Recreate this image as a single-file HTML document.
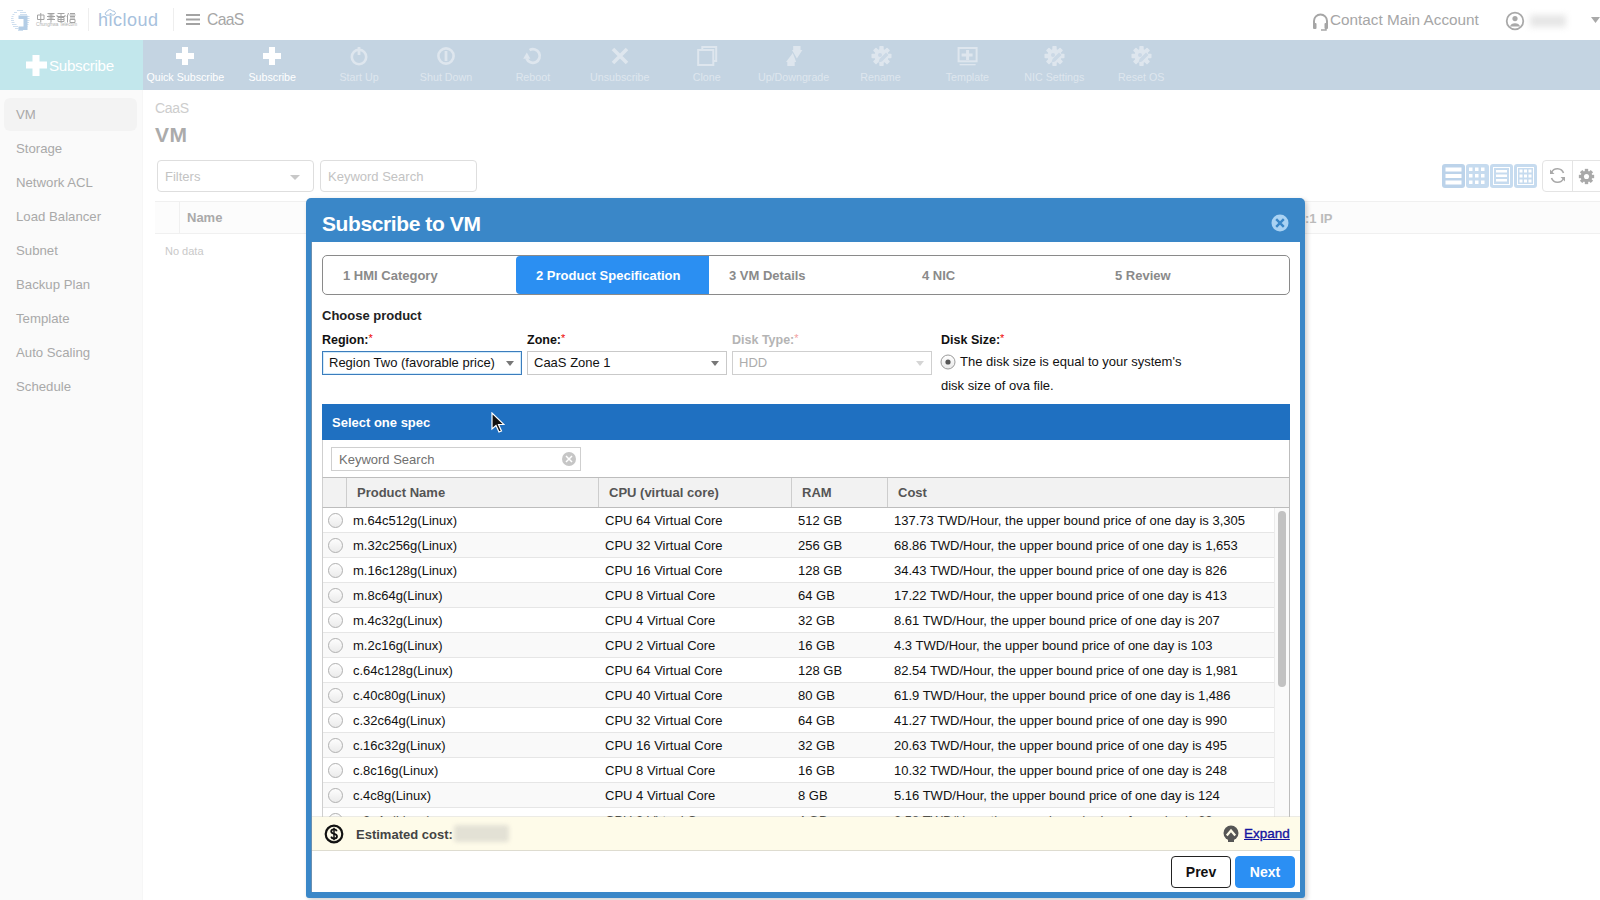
<!DOCTYPE html>
<html><head><meta charset="utf-8">
<style>
*{box-sizing:border-box;margin:0;padding:0}
html,body{width:1600px;height:900px;overflow:hidden;background:#fff;font-family:"Liberation Sans",sans-serif}
.a{position:absolute}
/* header */
#hdr{position:absolute;left:0;top:0;width:1600px;height:40px;background:#fff}
.sep{position:absolute;top:8px;width:1px;height:23px;background:#eee}
/* toolbar */
#tb{position:absolute;left:0;top:40px;width:1600px;height:50px;background:#c4d4e2}
#subbtn{position:absolute;left:0;top:40px;width:143px;height:50px;background:#c2e7ec}
.ti{position:absolute;top:40px;width:87px;height:50px;text-align:center;font-size:10.7px;white-space:nowrap}
.ti .tic{position:absolute;left:33.5px;top:6px;overflow:visible}
.ti span{position:absolute;left:0;right:0;top:31px;line-height:13px}
/* sidebar */
#side{position:absolute;left:0;top:90px;width:143px;height:810px;background:#fafafa;border-right:1px solid #f6f6f6}
#side .sel{position:absolute;left:4px;top:8px;width:133px;height:33px;background:#f3f3f3;border-radius:6px}
.si{position:absolute;left:16px;font-size:13.2px;line-height:18px;color:#a9a9a9}
/* page content */
.fbox{position:absolute;top:160px;height:32px;border:1px solid #dedede;border-radius:4px;background:#fff;font-size:13px;color:#c3c3c3;padding:1px 0 0 7px;line-height:30px}
#thdr{position:absolute;left:155px;top:201px;width:1445px;height:33px;background:#fcfcfc;border-top:1px solid #f0f0f0;border-bottom:1px solid #f0f0f0}
/* modal */
#modal{position:absolute;left:306px;top:198px;width:999px;height:700px;background:#3a87c8;border-radius:5px 5px 3px 3px;box-shadow:2px 2px 5px rgba(0,0,0,0.2)}
#mtitle{position:absolute;left:16px;top:13px;color:#fff;font-size:21px;font-weight:700;letter-spacing:-0.4px;line-height:26px}
#mbody{position:absolute;left:5px;top:44px;width:989px;height:650px;background:#fff;border-left:1px solid #6a8fb0}
#steps{position:absolute;left:322px;top:255px;width:968px;height:40px;border:1px solid #8a8a8a;border-radius:5px;background:#fff}
.st{position:absolute;top:1px;height:38px;line-height:38px;font-size:13px;font-weight:700;color:#8a8a8a;white-space:nowrap}
#stact{position:absolute;left:193px;top:0;width:193px;height:38px;background:#2b8ff2;border-radius:4px 0 0 4px}
.lbl{position:absolute;top:332px;font-size:12.5px;font-weight:700;color:#111;line-height:16px;white-space:nowrap}
.lbl b{color:#e00;font-weight:400;font-size:11px;position:relative;top:-2px;margin-left:0px}
.sel2{position:absolute;top:351px;width:200px;height:24px;border:1px solid #c9c9c9;background:#fff;font-size:13px;line-height:22px;color:#111;padding-left:6px;white-space:nowrap}
.sel2 .arr{position:absolute;right:7px;top:9px;width:0;height:0;border-left:4px solid transparent;border-right:4px solid transparent;border-top:5px solid #777}
#spechdr{position:absolute;left:322px;top:404px;width:968px;height:36px;background:#1f70c1;color:#fff;font-size:13px;font-weight:700;line-height:36px;padding:1px 0 0 10px}
#specpanel{position:absolute;left:322px;top:440px;width:968px;height:380px;border-left:1px solid #cfcfcf;border-right:1px solid #bdbdbd;background:#fff;overflow:hidden}
#ksearch{position:absolute;left:331px;top:447px;width:250px;height:24px;border:1px solid #cfcfcf;font-size:13px;color:#707070;line-height:23px;padding-left:7px}
#ksearch i{position:absolute;right:4px;top:4px;width:14px;height:14px;border-radius:50%;background:#c6c6c6}
#gh{position:absolute;left:322px;top:477px;width:968px;height:31px;background:#f2f2f2;border-top:1px solid #bdbdbd;border-bottom:1px solid #bdbdbd;border-left:1px solid #cfcfcf;border-right:1px solid #bdbdbd}
.gd{position:absolute;top:478px;width:1px;height:29px;background:#cdcdcd}
.gh{position:absolute;top:485px;font-size:13px;font-weight:700;color:#555;line-height:16px}
.row{position:absolute;left:323px;width:951px;height:25px;border-bottom:1px solid #e6e6e6;font-size:13px;color:#111;line-height:24px;white-space:nowrap}
.row span{position:absolute;top:1px}
.c1{left:30px}.c2{left:282px}.c3{left:475px}.c4{left:571px}
.rad{position:absolute;left:5px;top:5px;width:15px;height:15px;border-radius:50%;border:1px solid #b0b0b0;background:linear-gradient(#fdfdfd,#ebebeb)}
#sbtrack{position:absolute;left:1274px;top:508px;width:15px;height:309px;background:#fafafa;border-left:1px solid #ececec}
#sbthumb{position:absolute;left:1278px;top:511px;width:8px;height:176px;background:#c2c2c2;border-radius:4px}
#cost{position:absolute;left:312px;top:817px;width:988px;height:34px;box-shadow:0 -1px 0 rgba(200,198,180,0.35);background:#fefbe9;border-bottom:1px solid #dedcd0}
#costlbl{position:absolute;left:356px;top:827px;font-size:13px;font-weight:700;color:#444;line-height:16px}
#costblur{position:absolute;left:454px;top:825px;width:55px;height:17px;background:#e3e1d5;filter:blur(2px);border-radius:3px}
#expand{position:absolute;left:1244px;top:825px;font-size:13.5px;color:#1414a0;text-decoration:underline;line-height:17px;-webkit-text-stroke:0.35px #1414a0}
.btn{position:absolute;top:856px;height:32px;width:60px;border-radius:4px;font-size:14px;font-weight:700;text-align:center;line-height:30px}
</style></head><body>
<div id="hdr">
  <svg class="a" style="left:9px;top:9px" width="23" height="23" viewBox="0 0 23 23">
    <g stroke="#c9dbed" stroke-width="0.9">
      <path d="M8 1.5h6M5 3.5h3M11 3.5h6M3.5 5.5h2M11 5.5h7M2.5 7.5h2M13 7.5h7.5M2 9.5h2.5M15 9.5h5.5M2 11.5h3M15 11.5h5.5M2.5 13.5h3M15 13.5h5M3 15.5h4.5M15 15.5h4.5M4 17.5h5M15 17.5h3.5M6 19.5h3.5M15 19.5h2M9 21.5h5"/>
    </g>
    <path d="M9.5 6.5h9v14.5h-9v-3.5h5v-7.5h-5z" fill="#b3cde6"/>
  </svg>
  <svg class="a" style="left:36px;top:12px" width="40" height="16" viewBox="0 0 40 16">
    <g fill="none" stroke="#a4a4a4" stroke-width="1">
      <path d="M1.5 3h6.5v4.5H1.5zM4.75 1v9.5"/>
      <path d="M11.5 1.5h7M12.5 3h5M11 4.5h8M12.5 6h5M11 7.5h8M15 1v9.5"/>
      <path d="M21.5 1.5h7M21 3v1.5h8V3M25 1.5v3M22 5.5h6v4h-6zM22 7.5h6M25 5.5v4"/>
      <path d="M32.5 1l-1.5 4M31.5 3.5v7M34 1.5h5M33.5 3h6M34 4.5h5M34 6h5M34 7.5h5v3h-5z"/>
    </g>
  </svg>
  <div class="a" style="left:36px;top:22px;font-size:4.7px;color:#b0b0b0;line-height:6px;white-space:nowrap;letter-spacing:0px">Chunghwa Telecom</div>
  <div class="sep" style="left:88px"></div>
  <div class="a" style="left:98px;top:8px;font-size:18px;color:#a7c1dd;letter-spacing:0.5px;line-height:24px">hicloud</div>
  <svg class="a" style="left:104px;top:9px" width="12" height="7" viewBox="0 0 12 7"><path d="M2 6.2a2 2 0 0 1 1-3.5 3 3 0 0 1 5.5-.5 2 2 0 0 1 1.5 3.8z" fill="none" stroke="#a7c1dd" stroke-width="1"/></svg>
  <div class="sep" style="left:173px"></div>
  <svg class="a" style="left:186px;top:14px" width="14" height="11" viewBox="0 0 14 11"><path d="M0 1h14M0 5.5h14M0 10h14" stroke="#a3a3a3" stroke-width="1.8"/></svg>
  <div class="a" style="left:207px;top:10px;font-size:15.7px;color:#a6a6a6;line-height:20px;letter-spacing:-0.7px">CaaS</div>

  <svg class="a" style="left:1312px;top:13px" width="17" height="18" viewBox="0 0 17 18">
    <path d="M2 11V8a6.5 6.5 0 0 1 13 0v3" fill="none" stroke="#a6a6a6" stroke-width="2"/>
    <rect x="1" y="10" width="3.5" height="6" rx="1" fill="#a6a6a6"/><rect x="12.5" y="10" width="3.5" height="6" rx="1" fill="#a6a6a6"/>
    <path d="M14 15v2h-5" fill="none" stroke="#a6a6a6" stroke-width="1.5"/>
  </svg>
  <div class="a" style="left:1330px;top:10px;font-size:15.3px;color:#a6a6a6;line-height:20px">Contact Main Account</div>
  <svg class="a" style="left:1505px;top:11px" width="20" height="20" viewBox="0 0 20 20">
    <circle cx="10" cy="10" r="8.3" fill="none" stroke="#a9a9a9" stroke-width="1.8"/>
    <circle cx="10" cy="7.6" r="2.6" fill="#a9a9a9"/>
    <path d="M4.8 15.5a5.5 5 0 0 1 10.4 0" fill="#a9a9a9"/>
  </svg>
  <div class="a" style="left:1530px;top:15px;width:36px;height:12px;background:#e6e6e6;filter:blur(3px)"></div>
  <svg class="a" style="left:1591px;top:17px" width="9" height="7" viewBox="0 0 9 7"><path d="M0 0h9L4.5 6z" fill="#a9a9a9"/></svg>
</div>

<div id="tb"></div>
<div id="subbtn">
  <svg class="a" style="left:26px;top:15px" width="21" height="21" viewBox="0 0 21 21"><path d="M6.5 0h7v6.5H21v7h-7.5V21h-7v-7.5H0v-7h6.5z" fill="#fff"/></svg>
  <div class="a" style="left:49px;top:16px;font-size:15.2px;color:#fff;line-height:19px;letter-spacing:-0.3px">Subscribe</div>
</div>
<div class="ti" style="left:141.8px;color:#fff"><svg class="tic" width="20" height="20" viewBox="0 0 20 20"><path d="M7 1h6v6h6v6h-6v6H7v-6H1V7h6z" fill="#fff"/></svg><span>Quick Subscribe</span></div>
<div class="ti" style="left:228.70000000000002px;color:#fff"><svg class="tic" width="20" height="20" viewBox="0 0 20 20"><path d="M7 1h6v6h6v6h-6v6H7v-6H1V7h6z" fill="#fff"/></svg><span>Subscribe</span></div>
<div class="ti" style="left:315.6px;color:#dee6ee"><svg class="tic" width="20" height="20" viewBox="0 0 20 20"><circle cx="10" cy="11" r="7.2" fill="none" stroke="#dee6ee" stroke-width="2.6"/><rect x="8.6" y="1" width="2.8" height="8" fill="#dee6ee"/><rect x="7.8" y="2" width="4.4" height="1.5" fill="#c4d4e2" opacity="0"/></svg><span>Start Up</span></div>
<div class="ti" style="left:402.50000000000006px;color:#dee6ee"><svg class="tic" width="20" height="20" viewBox="0 0 20 20"><circle cx="10" cy="10" r="7.6" fill="none" stroke="#dee6ee" stroke-width="2.6"/><rect x="8.6" y="5" width="2.8" height="10" fill="#dee6ee"/></svg><span>Shut Down</span></div>
<div class="ti" style="left:489.40000000000003px;color:#dee6ee"><svg class="tic" width="20" height="20" viewBox="0 0 20 20"><path d="M6.6 4.1A6.8 6.8 0 1 1 3.6 12.5" fill="none" stroke="#dee6ee" stroke-width="2.8"/><path d="M0.2 12.8l3.6-6.3 3.6 6.3z" fill="#dee6ee"/></svg><span>Reboot</span></div>
<div class="ti" style="left:576.3px;color:#dee6ee"><svg class="tic" width="20" height="20" viewBox="0 0 20 20"><path d="M3 3L17 17M17 3L3 17" stroke="#dee6ee" stroke-width="3.6"/></svg><span>Unsubscribe</span></div>
<div class="ti" style="left:663.2px;color:#dee6ee"><svg class="tic" width="20" height="20" viewBox="0 0 20 20"><path d="M1.2 4.1h15.1v14.9H1.2z" fill="none" stroke="#dee6ee" stroke-width="2"/><path d="M5.3 4.1V1.1h13.9v13.8h-2.9" fill="none" stroke="#dee6ee" stroke-width="2"/></svg><span>Clone</span></div>
<div class="ti" style="left:750.1000000000001px;color:#dee6ee"><svg class="tic" width="20" height="20" viewBox="0 0 20 20"><path d="M9.2 0h7.3v4h1.9l-5.5 8.5L8 4h1.2z" fill="#dee6ee"/><path d="M8.8 7l3.4 9h-1.5v4H3.3v-4H2z" fill="#dee6ee"/></svg><span>Up/Downgrade</span></div>
<div class="ti" style="left:837.0px;color:#dee6ee"><svg class="tic" width="20" height="20" viewBox="0 0 20 20"><g fill="#dee6ee"><circle cx="10.5" cy="10" r="7"/><rect x="8.3" y="0" width="4.4" height="20" rx="0.8"/><rect x="0.5" y="7.8" width="20" height="4.4" rx="0.8"/><rect x="8.3" y="0" width="4.4" height="20" rx="0.8" transform="rotate(45 10.5 10)"/><rect x="8.3" y="0" width="4.4" height="20" rx="0.8" transform="rotate(-45 10.5 10)"/></g><path d="M7.5 16.5l1-3.5 6.5-6.5 2.5 2.5-6.5 6.5z" fill="#cbd9e6"/><circle cx="9" cy="9" r="2" fill="#cbd9e6"/></svg><span>Rename</span></div>
<div class="ti" style="left:923.9000000000001px;color:#dee6ee"><svg class="tic" width="20" height="20" viewBox="0 0 20 20"><rect x="1.6" y="2" width="18" height="13.3" fill="none" stroke="#dee6ee" stroke-width="2"/><path d="M10.6 4v10M4.6 9h11" stroke="#dee6ee" stroke-width="3"/><rect x="2.6" y="18" width="16" height="1.3" fill="#dee6ee"/></svg><span>Template</span></div>
<div class="ti" style="left:1010.8px;color:#dee6ee"><svg class="tic" width="20" height="20" viewBox="0 0 20 20"><g fill="#dee6ee"><circle cx="10.5" cy="10" r="7"/><rect x="8.3" y="0" width="4.4" height="20" rx="0.8"/><rect x="0.5" y="7.8" width="20" height="4.4" rx="0.8"/><rect x="8.3" y="0" width="4.4" height="20" rx="0.8" transform="rotate(45 10.5 10)"/><rect x="8.3" y="0" width="4.4" height="20" rx="0.8" transform="rotate(-45 10.5 10)"/></g><path d="M7.5 16.5l1-3.5 6.5-6.5 2.5 2.5-6.5 6.5z" fill="#cbd9e6"/><circle cx="9" cy="9" r="2" fill="#cbd9e6"/></svg><span>NIC Settings</span></div>
<div class="ti" style="left:1097.7px;color:#dee6ee"><svg class="tic" width="20" height="20" viewBox="0 0 20 20"><g fill="#dee6ee"><circle cx="10.5" cy="10" r="7"/><rect x="8.3" y="0" width="4.4" height="20" rx="0.8"/><rect x="0.5" y="7.8" width="20" height="4.4" rx="0.8"/><rect x="8.3" y="0" width="4.4" height="20" rx="0.8" transform="rotate(45 10.5 10)"/><rect x="8.3" y="0" width="4.4" height="20" rx="0.8" transform="rotate(-45 10.5 10)"/></g><path d="M7.5 16.5l1-3.5 6.5-6.5 2.5 2.5-6.5 6.5z" fill="#cbd9e6"/><circle cx="9" cy="9" r="2" fill="#cbd9e6"/></svg><span>Reset OS</span></div>


<div id="side">
<div class="sel"></div><div class="si" style="top:16px">VM</div>
<div class="si" style="top:50px">Storage</div>
<div class="si" style="top:84px">Network ACL</div>
<div class="si" style="top:118px">Load Balancer</div>
<div class="si" style="top:152px">Subnet</div>
<div class="si" style="top:186px">Backup Plan</div>
<div class="si" style="top:220px">Template</div>
<div class="si" style="top:254px">Auto Scaling</div>
<div class="si" style="top:288px">Schedule</div>

</div>

<div class="a" style="left:155px;top:99px;font-size:14px;color:#cdcdcd;line-height:18px;letter-spacing:-0.3px">CaaS</div>
<div class="a" style="left:155px;top:123px;font-size:21px;color:#ababab;line-height:24px;font-weight:700;letter-spacing:0.6px">VM</div>
<div class="fbox" style="left:157px;width:157px">Filters<i class="a" style="right:13px;top:14px;width:0;height:0;border-left:5px solid transparent;border-right:5px solid transparent;border-top:5px solid #c8c8c8"></i></div>
<div class="fbox" style="left:320px;width:157px">Keyword Search</div>
<div id="thdr"></div>
<div class="a" style="left:179px;top:202px;width:1px;height:31px;background:#f0f0f0"></div>
<div class="a" style="left:187px;top:210px;font-size:13px;font-weight:700;color:#aaa;line-height:16px">Name</div>
<div class="a" style="left:1305px;top:211px;font-size:13px;font-weight:700;color:#bbb;line-height:16px">:1 IP</div>
<div class="a" style="left:165px;top:244px;font-size:11px;color:#c9c9c9;line-height:14px">No data</div>

<!-- view buttons -->
<div class="a" style="left:1442px;top:164px;width:23px;height:24px;background:#bcd3ea;border-radius:3px"></div>
<div class="a" style="left:1466px;top:164px;width:23px;height:24px;background:#c6dbef;border-radius:3px"></div>
<div class="a" style="left:1490px;top:164px;width:23px;height:24px;background:#c6dbef;border-radius:3px"></div>
<div class="a" style="left:1514px;top:164px;width:23px;height:24px;background:#c6dbef;border-radius:3px"></div>
<svg class="a" style="left:1442px;top:164px" width="96" height="24" viewBox="0 0 96 24">
  <g fill="#fff"><rect x="3.5" y="3.5" width="16" height="4"/><rect x="3.5" y="10" width="16" height="4"/><rect x="3.5" y="16.5" width="16" height="4"/></g>
  <g fill="#fff"><rect x="27" y="3.5" width="3.5" height="3.5"/><rect x="33" y="3.5" width="3.5" height="3.5"/><rect x="39" y="3.5" width="3.5" height="3.5"/>
  <rect x="27" y="10" width="3.5" height="3.5"/><rect x="33" y="10" width="3.5" height="3.5"/><rect x="39" y="10" width="3.5" height="3.5"/>
  <rect x="27" y="16.5" width="3.5" height="3.5"/><rect x="33" y="16.5" width="3.5" height="3.5"/><rect x="39" y="16.5" width="3.5" height="3.5"/></g>
  <rect x="51.5" y="3.5" width="16" height="17" fill="none" stroke="#fff" stroke-width="1"/>
  <g fill="#fff"><rect x="54" y="6" width="11" height="2.5"/><rect x="54" y="10.5" width="11" height="2.5"/><rect x="54" y="15" width="11" height="2.5"/></g>
  <rect x="75.5" y="3.5" width="16" height="17" fill="none" stroke="#fff" stroke-width="1"/>
  <g fill="#fff"><rect x="77.5" y="5.5" width="3" height="3"/><rect x="82" y="5.5" width="3" height="3"/><rect x="86.5" y="5.5" width="3" height="3"/>
  <rect x="77.5" y="10.5" width="3" height="3"/><rect x="82" y="10.5" width="3" height="3"/><rect x="86.5" y="10.5" width="3" height="3"/>
  <rect x="77.5" y="15.5" width="3" height="3"/><rect x="82" y="15.5" width="3" height="3"/><rect x="86.5" y="15.5" width="3" height="3"/></g>
</svg>
<div class="a" style="left:1542px;top:160px;width:70px;height:32px;border:1px solid #e4e4e4;border-radius:4px;background:#fff"></div>
<div class="a" style="left:1572px;top:161px;width:1px;height:30px;background:#e4e4e4"></div>
<svg class="a" style="left:1549px;top:167px" width="17" height="17" viewBox="0 0 17 17">
  <path d="M14.5 6A6.5 6.5 0 0 0 2.5 5.5M2.5 11a6.5 6.5 0 0 0 12 .5" fill="none" stroke="#a9a9a9" stroke-width="1.6"/>
  <path d="M1 2.5v4.5h4.5z" fill="#a9a9a9"/><path d="M16 14.5V10h-4.5z" fill="#a9a9a9"/>
</svg>
<svg class="a" style="left:1578px;top:168px" width="17" height="17" viewBox="0 0 20 20">
  <g fill="#a9a9a9"><circle cx="10" cy="10" r="6.8"/><rect x="8" y="1" width="4" height="18"/><rect x="1" y="8" width="18" height="4"/><rect x="8" y="1" width="4" height="18" transform="rotate(45 10 10)"/><rect x="8" y="1" width="4" height="18" transform="rotate(-45 10 10)"/></g>
  <circle cx="10" cy="10" r="3" fill="#fff"/>
</svg>

<!-- modal -->
<div id="modal">
  <div id="mtitle">Subscribe to VM</div>
  <svg class="a" style="left:965px;top:16px" width="18" height="18" viewBox="0 0 18 18">
    <circle cx="9" cy="9" r="8.5" fill="#a9d2f3"/>
    <path d="M5.2 5.2l7.6 7.6M12.8 5.2l-7.6 7.6" stroke="#3a87c8" stroke-width="2.4"/>
  </svg>
  <div id="mbody"></div>
</div>

<div id="steps">
  <div id="stact"></div>
  <div class="st" style="left:20px">1 HMI Category</div>
  <div class="st" style="left:213px;color:#fff">2 Product Specification</div>
  <div class="st" style="left:406px">3 VM Details</div>
  <div class="st" style="left:599px">4 NIC</div>
  <div class="st" style="left:792px">5 Review</div>
</div>

<div class="a" style="left:322px;top:308px;font-size:13px;font-weight:700;color:#222;line-height:16px">Choose product</div>
<div class="lbl" style="left:322px">Region:<b>*</b></div>
<div class="lbl" style="left:527px">Zone:<b>*</b></div>
<div class="lbl" style="left:732px;color:#b4b4b4">Disk Type:<b style="color:#f3a0a0">*</b></div>
<div class="lbl" style="left:941px">Disk Size:<b>*</b></div>
<div class="sel2" style="left:322px;border-color:#3b7dbd;box-shadow:inset 0 0 0 1px #d3ebfb">Region Two (favorable price)<i class="arr"></i></div>
<div class="sel2" style="left:527px">CaaS Zone 1<i class="arr"></i></div>
<div class="sel2" style="left:732px;color:#adadad;border-color:#cfcfcf">HDD<i class="arr" style="border-top-color:#d5d5d5"></i></div>
<svg class="a" style="left:940px;top:354px" width="16" height="16" viewBox="0 0 16 16">
  <defs><linearGradient id="rg" x1="0" y1="0" x2="0" y2="1"><stop offset="0" stop-color="#fff"/><stop offset="1" stop-color="#e8e8e8"/></linearGradient></defs>
  <circle cx="8" cy="8" r="7" fill="url(#rg)" stroke="#9a9a9a" stroke-width="1"/>
  <circle cx="8" cy="8" r="2.6" fill="#555"/>
</svg>
<div class="a" style="left:960px;top:354px;font-size:13px;color:#111;line-height:16px;white-space:nowrap">The disk size is equal to your system's</div>
<div class="a" style="left:941px;top:378px;font-size:13px;color:#111;line-height:16px;white-space:nowrap">disk size of ova file.</div>

<div id="spechdr">Select one spec</div>
<div id="specpanel"></div>
<div id="ksearch">Keyword Search<i><svg class="a" style="left:3px;top:3px" width="8" height="8" viewBox="0 0 8 8"><path d="M1 1l6 6M7 1L1 7" stroke="#fff" stroke-width="1.5"/></svg></i></div>
<div id="gh"></div>
<div class="gd" style="left:346px"></div>
<div class="gd" style="left:598px"></div>
<div class="gd" style="left:791px"></div>
<div class="gd" style="left:887px"></div>
<div class="gh" style="left:357px">Product Name</div>
<div class="gh" style="left:609px">CPU (virtual core)</div>
<div class="gh" style="left:802px">RAM</div>
<div class="gh" style="left:898px">Cost</div>
<div class="a" style="left:322px;top:508px;width:968px;height:309px;overflow:hidden">
<div style="position:absolute;left:-322px;top:-508px;width:1600px;height:900px">
<div class="row" style="top:508px;background:#fff"><i class="rad"></i><span class="c1">m.64c512g(Linux)</span><span class="c2">CPU 64 Virtual Core</span><span class="c3">512 GB</span><span class="c4">137.73 TWD/Hour, the upper bound price of one day is 3,305</span></div>
<div class="row" style="top:533px;background:#f9f9f9"><i class="rad"></i><span class="c1">m.32c256g(Linux)</span><span class="c2">CPU 32 Virtual Core</span><span class="c3">256 GB</span><span class="c4">68.86 TWD/Hour, the upper bound price of one day is 1,653</span></div>
<div class="row" style="top:558px;background:#fff"><i class="rad"></i><span class="c1">m.16c128g(Linux)</span><span class="c2">CPU 16 Virtual Core</span><span class="c3">128 GB</span><span class="c4">34.43 TWD/Hour, the upper bound price of one day is 826</span></div>
<div class="row" style="top:583px;background:#f9f9f9"><i class="rad"></i><span class="c1">m.8c64g(Linux)</span><span class="c2">CPU 8 Virtual Core</span><span class="c3">64 GB</span><span class="c4">17.22 TWD/Hour, the upper bound price of one day is 413</span></div>
<div class="row" style="top:608px;background:#fff"><i class="rad"></i><span class="c1">m.4c32g(Linux)</span><span class="c2">CPU 4 Virtual Core</span><span class="c3">32 GB</span><span class="c4">8.61 TWD/Hour, the upper bound price of one day is 207</span></div>
<div class="row" style="top:633px;background:#f9f9f9"><i class="rad"></i><span class="c1">m.2c16g(Linux)</span><span class="c2">CPU 2 Virtual Core</span><span class="c3">16 GB</span><span class="c4">4.3 TWD/Hour, the upper bound price of one day is 103</span></div>
<div class="row" style="top:658px;background:#fff"><i class="rad"></i><span class="c1">c.64c128g(Linux)</span><span class="c2">CPU 64 Virtual Core</span><span class="c3">128 GB</span><span class="c4">82.54 TWD/Hour, the upper bound price of one day is 1,981</span></div>
<div class="row" style="top:683px;background:#f9f9f9"><i class="rad"></i><span class="c1">c.40c80g(Linux)</span><span class="c2">CPU 40 Virtual Core</span><span class="c3">80 GB</span><span class="c4">61.9 TWD/Hour, the upper bound price of one day is 1,486</span></div>
<div class="row" style="top:708px;background:#fff"><i class="rad"></i><span class="c1">c.32c64g(Linux)</span><span class="c2">CPU 32 Virtual Core</span><span class="c3">64 GB</span><span class="c4">41.27 TWD/Hour, the upper bound price of one day is 990</span></div>
<div class="row" style="top:733px;background:#f9f9f9"><i class="rad"></i><span class="c1">c.16c32g(Linux)</span><span class="c2">CPU 16 Virtual Core</span><span class="c3">32 GB</span><span class="c4">20.63 TWD/Hour, the upper bound price of one day is 495</span></div>
<div class="row" style="top:758px;background:#fff"><i class="rad"></i><span class="c1">c.8c16g(Linux)</span><span class="c2">CPU 8 Virtual Core</span><span class="c3">16 GB</span><span class="c4">10.32 TWD/Hour, the upper bound price of one day is 248</span></div>
<div class="row" style="top:783px;background:#f9f9f9"><i class="rad"></i><span class="c1">c.4c8g(Linux)</span><span class="c2">CPU 4 Virtual Core</span><span class="c3">8 GB</span><span class="c4">5.16 TWD/Hour, the upper bound price of one day is 124</span></div>
<div class="row" style="top:808px;background:#fff"><i class="rad"></i><span class="c1">c.2c4g(Linux)</span><span class="c2">CPU 2 Virtual Core</span><span class="c3">4 GB</span><span class="c4">2.58 TWD/Hour, the upper bound price of one day is 62</span></div>

</div>
</div>
<div id="sbtrack"></div>
<div id="sbthumb"></div>

<div id="cost"></div>
<svg class="a" style="left:324px;top:824px" width="20" height="20" viewBox="0 0 20 20">
  <circle cx="10" cy="10" r="8.3" fill="none" stroke="#111" stroke-width="2.2"/>
  <path d="M12.8 7.2c-.4-1.2-1.5-1.8-2.8-1.8-1.6 0-2.8.9-2.8 2.2 0 3 5.8 1.6 5.8 4.6 0 1.3-1.3 2.3-3 2.3-1.4 0-2.5-.7-2.9-1.9" fill="none" stroke="#111" stroke-width="1.8"/>
  <path d="M10 3.8v12.4" stroke="#111" stroke-width="1.5"/>
</svg>
<div id="costlbl">Estimated cost:</div>
<div id="costblur"></div>
<svg class="a" style="left:1222px;top:825px" width="18" height="18" viewBox="0 0 18 18">
  <circle cx="9" cy="8" r="7.5" fill="#555"/>
  <path d="M4.8 10.5L9 5.5l4.2 5" fill="none" stroke="#fefbe9" stroke-width="2.2"/>
  <rect x="6" y="15" width="6" height="2" fill="#555"/>
</svg>
<div id="expand">Expand</div>
<div class="btn" style="left:1171px;border:1px solid #222;background:#fff;color:#111">Prev</div>
<div class="btn" style="left:1235px;background:#2b8ff3;color:#fff;border:1px solid #2b8ff3">Next</div>

<!-- cursor -->
<svg class="a" style="left:491px;top:412px" width="14" height="22" viewBox="0 0 14 22">
  <path d="M1 1v16l4-3.5 3 6.5 2.5-1-3-6.5H13z" fill="#111" stroke="#fff" stroke-width="1.2"/>
</svg>
</body></html>
